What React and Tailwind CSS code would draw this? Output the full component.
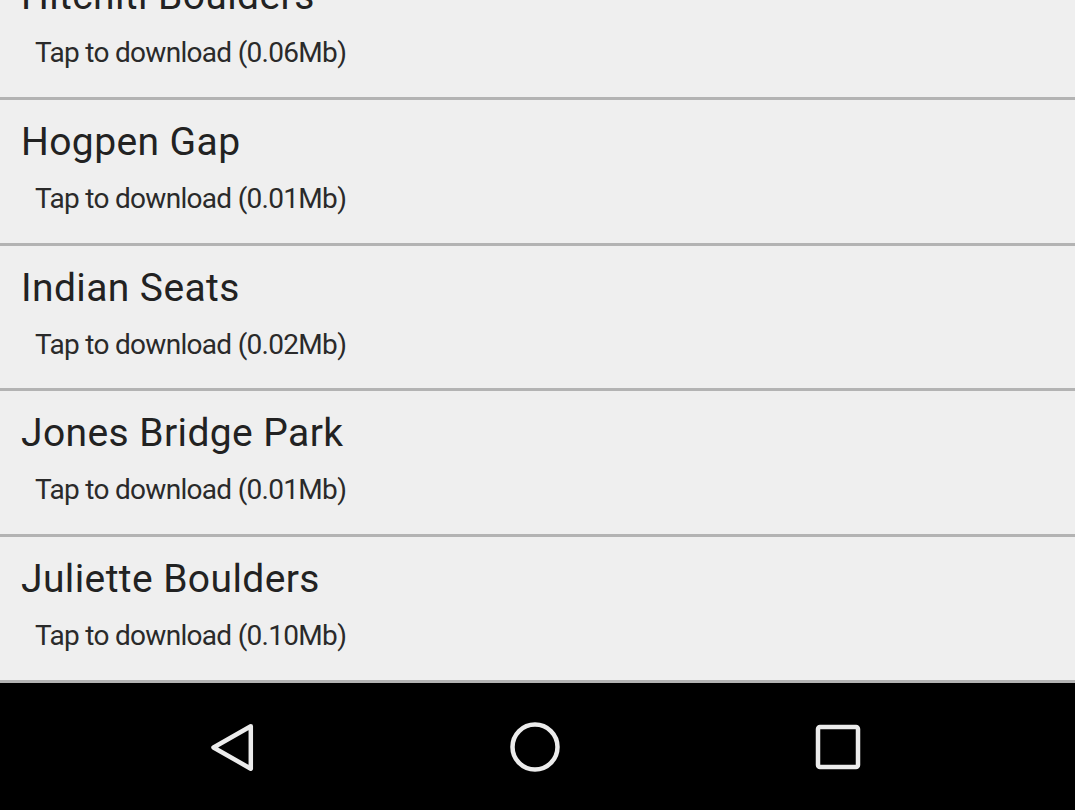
const spots = [
    { name: 'Hitchiti Boulders', size: '0.06' },
    { name: 'Hogpen Gap', size: '0.01' },
    { name: 'Indian Seats', size: '0.02' },
    { name: 'Jones Bridge Park', size: '0.01' },
    { name: 'Juliette Boulders', size: '0.10' },
]

function SpotRow({ spot }) {
    return (
        <div className="h-[145.7px] shrink-0 border-b-[3px] border-[#b3b3b3] bg-[#efefef]">
            <div className="pl-[21px] pt-[19px] text-[39px] leading-[46px] tracking-[0.4px] text-[#222222]">{spot.name}</div>
            <div className="pl-[35px] mt-[17px] text-[28px] leading-[33px] tracking-[-0.7px] text-[#2a2a2a]">
                Tap to download ({spot.size}Mb)
            </div>
        </div>
    )
}

function NavBar() {
    return (
        <div className="h-[127px] bg-black flex justify-center items-center pr-[6px]">
            <div className="w-[303px] flex justify-center">
                <svg width="46" height="52" viewBox="0 0 46 52" fill="none">
                    <path d="M41.8 5.3 L4.5 26.5 L41.8 47.7 Z" stroke="#ececec" strokeWidth="4.5" strokeLinejoin="round" />
                </svg>
            </div>
            <div className="w-[303px] flex justify-center">
                <svg width="54" height="54" viewBox="0 0 54 54" fill="none">
                    <circle cx="27" cy="27" r="22.5" stroke="#ececec" strokeWidth="4.5" />
                </svg>
            </div>
            <div className="w-[303px] flex justify-center">
                <svg width="48" height="48" viewBox="0 0 48 48" fill="none">
                    <rect x="4" y="4" width="40" height="40" rx="2" stroke="#ececec" strokeWidth="4.5" />
                </svg>
            </div>
        </div>
    )
}

export default function App() {
    return (
        <div className="w-[1075px] h-[810px] overflow-hidden flex flex-col bg-[#efefef] font-['Roboto',sans-serif]">
            <div className="flex-1 overflow-hidden">
                <div className="mt-[-45.7px] flex flex-col">
                    {spots.map(s => (
                        <SpotRow key={s.name} spot={s} />
                    ))}
                </div>
            </div>
            <NavBar />
        </div>
    )
}
